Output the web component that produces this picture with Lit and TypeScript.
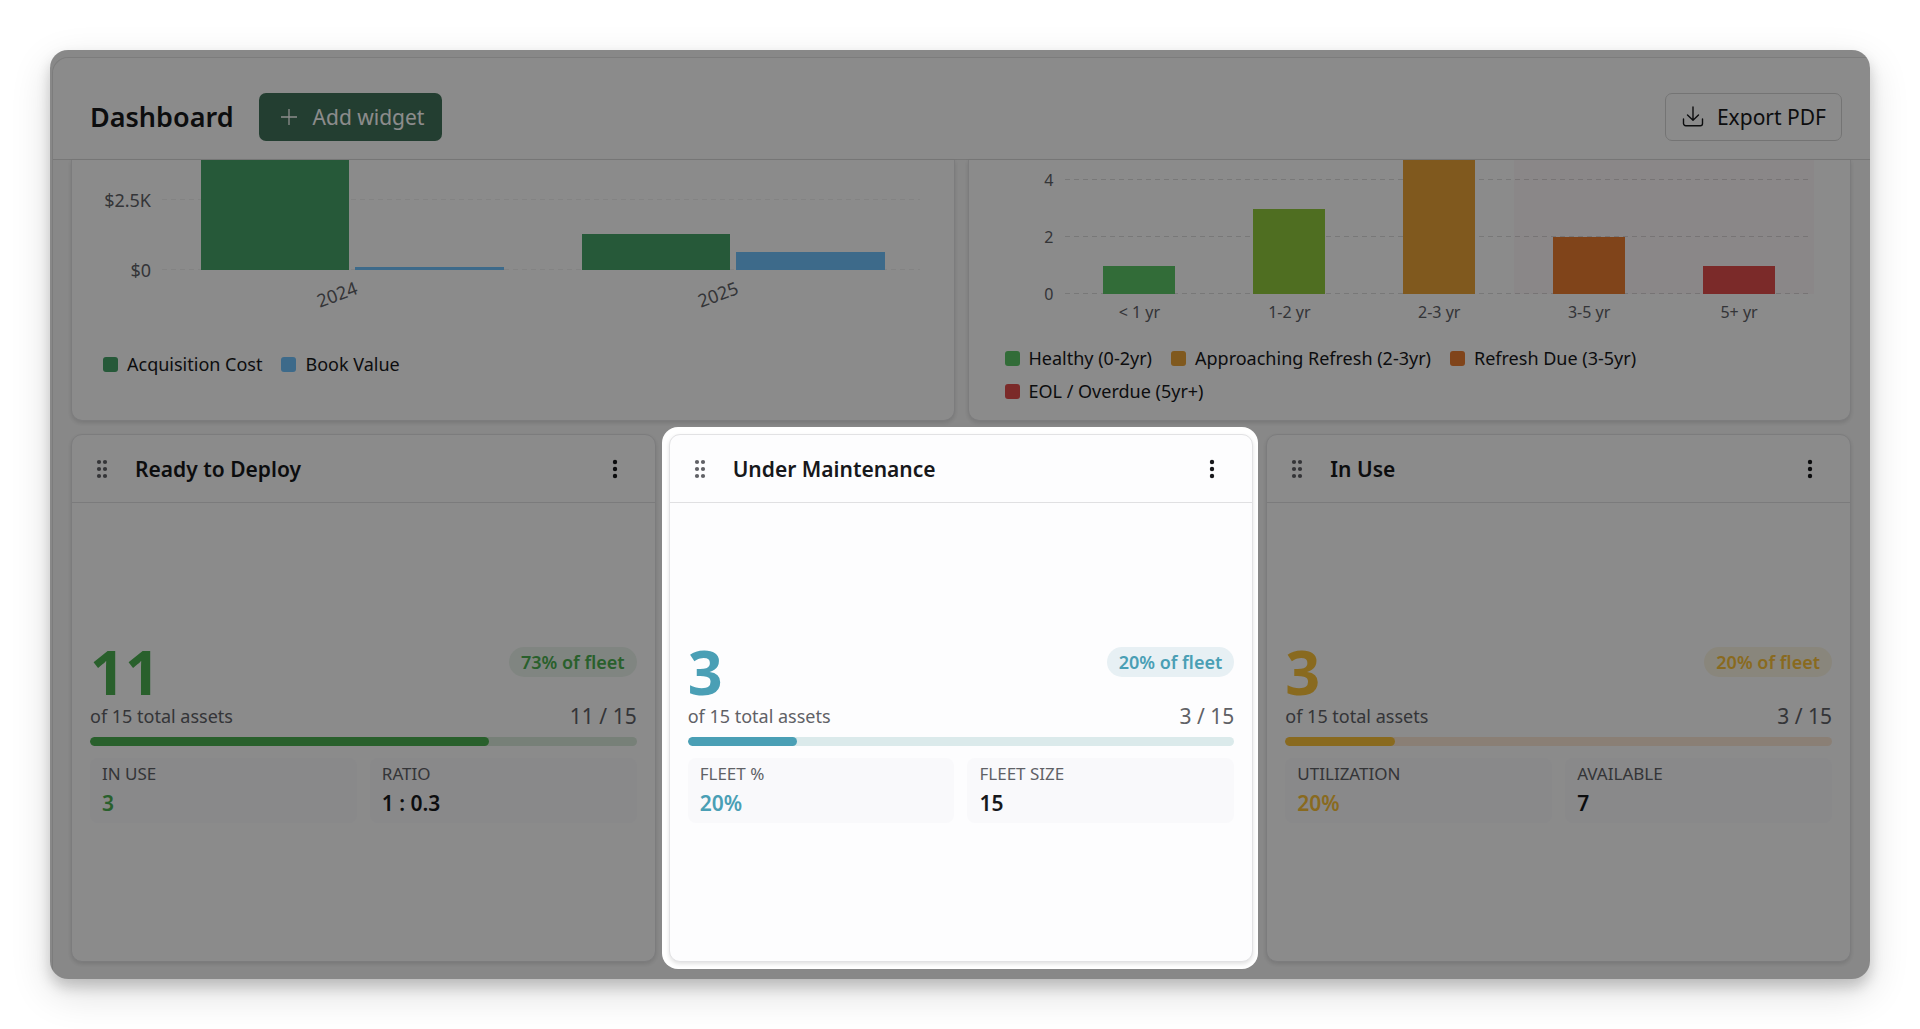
import { LitElement, html, css, svg } from "lit";
import { customElement, property } from "lit/decorators.js";
import { styleMap } from "lit/directives/style-map.js";

interface LegendItem {
  label: string;
  color: string;
}

interface Tile {
  label: string;
  value: string;
  accent?: boolean;
}

interface Stat {
  title: string;
  count: number;
  total: number;
  color: string;
  track: string;
  badge: string;
  tiles: Tile[];
  focused?: boolean;
}

const stats: Stat[] = [
  {
    title: "Ready to Deploy",
    count: 11,
    total: 15,
    color: "#4caf50",
    track: "#d9e9da",
    badge: "#eaf3eb",
    tiles: [
      { label: "IN USE", value: "3", accent: true },
      { label: "RATIO", value: "1 : 0.3" },
    ],
  },
  {
    title: "Under Maintenance",
    count: 3,
    total: 15,
    color: "#4a9fb5",
    track: "#dbeaeb",
    badge: "#e7f0f4",
    tiles: [
      { label: "FLEET %", value: "20%", accent: true },
      { label: "FLEET SIZE", value: "15" },
    ],
    focused: true,
  },
  {
    title: "In Use",
    count: 3,
    total: 15,
    color: "#f9c23a",
    track: "#fbe8d6",
    badge: "#faf4e2",
    tiles: [
      { label: "UTILIZATION", value: "20%", accent: true },
      { label: "AVAILABLE", value: "7" },
    ],
  },
];

/* Bar heights are in pixels above the zero line. */
const costGroups = [
  { year: "2024", cost: 110, book: 3 },
  { year: "2025", cost: 36, book: 18 },
];

const costLegend: LegendItem[] = [
  { label: "Acquisition Cost", color: "#45a268" },
  { label: "Book Value", color: "#6fc1fb" },
];

const ageGroups = [
  { label: "< 1 yr", height: 28, color: "#5cc566" },
  { label: "1-2 yr", height: 85, color: "#90c83c" },
  { label: "2-3 yr", height: 134, color: "#e9a237" },
  { label: "3-5 yr", height: 57, color: "#e97c31", due: true },
  { label: "5+ yr", height: 28, color: "#e04e4c", due: true },
];

const ageLegend: LegendItem[] = [
  { label: "Healthy (0-2yr)", color: "#5cc566" },
  { label: "Approaching Refresh (2-3yr)", color: "#e9a237" },
  { label: "Refresh Due (3-5yr)", color: "#e97c31" },
  { label: "EOL / Overdue (5yr+)", color: "#e04e4c" },
];

const shared = css`
  * {
    box-sizing: border-box;
  }
  button {
    font: inherit;
    color: inherit;
    background: none;
    border: 0;
    padding: 0;
    cursor: pointer;
  }
  svg {
    display: block;
  }
`;

@customElement("stat-card")
export class StatCard extends LitElement {
  @property({ attribute: false }) stat!: Stat;

  static styles = [
    shared,
    css`
      :host {
        display: flex;
        min-width: 0;
      }
      .card {
        flex: 1;
        min-width: 0;
        display: flex;
        flex-direction: column;
        background: #fdfdfe;
        border: 1px solid #e2e2e4;
        border-radius: 11px;
        box-shadow: 0 2px 4px rgba(0, 0, 0, 0.12);
      }
      .head {
        display: flex;
        align-items: center;
        height: 68px;
        padding: 0 24px;
        border-bottom: 1px solid #e0e0e2;
      }
      .grip {
        color: #606166;
        margin-right: 27px;
      }
      h2 {
        flex: 1;
        margin: 0;
        font-size: 21px;
        line-height: 28px;
        font-weight: 600;
      }
      .more {
        width: 32px;
        height: 32px;
        display: grid;
        place-items: center;
      }
      .body {
        flex: 1;
        display: flex;
        flex-direction: column;
        justify-content: center;
        padding: 12px 18px;
      }
      .top {
        display: flex;
        justify-content: space-between;
        align-items: flex-start;
      }
      .count {
        font-size: 61px;
        line-height: 60px;
        font-weight: 700;
      }
      .badge {
        margin-top: 5px;
        padding: 0 12px;
        border-radius: 15px;
        font-size: 18px;
        line-height: 30px;
        font-weight: 600;
      }
      .mid {
        display: flex;
        justify-content: space-between;
        align-items: center;
        color: #606166;
      }
      .sub {
        font-size: 18px;
        line-height: 24px;
      }
      .frac {
        font-size: 21px;
        line-height: 28px;
      }
      .track {
        height: 9px;
        margin-top: 7px;
        border-radius: 5px;
        overflow: hidden;
      }
      .fill {
        height: 100%;
        border-radius: 5px;
      }
      .tiles {
        display: grid;
        grid-template-columns: 1fr 1fr;
        gap: 13px;
        margin: 12px 0 0;
      }
      .tile {
        padding: 4px 12px 6px;
        border-radius: 8px;
        background: #f9f9fb;
      }
      dt {
        color: #606166;
        font-size: 17px;
        line-height: 24px;
      }
      dd {
        margin: 3px 0 0;
        font-size: 21px;
        line-height: 28px;
        font-weight: 600;
      }
    `,
  ];

  render() {
    const s = this.stat;
    const share = Math.round((s.count / s.total) * 100);
    return html`
      <section class="card">
        <header class="head">
          <button class="grip" aria-label="Move ${s.title}">
            <svg width="12" height="24" viewBox="6 0 12 24" fill="currentColor">
              ${[5, 12, 19].map(
                (y) => svg`<circle cx="9" cy=${y} r="2.1" /><circle cx="15" cy=${y} r="2.1" />`
              )}
            </svg>
          </button>
          <h2>${s.title}</h2>
          <button class="more" aria-label="${s.title} options">
            <svg width="24" height="24" viewBox="0 0 24 24" fill="currentColor">
              ${[5, 12, 19].map((y) => svg`<circle cx="12" cy=${y} r="2.2" />`)}
            </svg>
          </button>
        </header>
        <div class="body">
          <div class="top">
            <span class="count" style=${styleMap({ color: s.color })}>${s.count}</span>
            <span class="badge" style=${styleMap({ color: s.color, background: s.badge })}
              >${share}% of fleet</span
            >
          </div>
          <div class="mid">
            <span class="sub">of ${s.total} total assets</span>
            <span class="frac">${s.count} / ${s.total}</span>
          </div>
          <div
            class="track"
            role="progressbar"
            aria-label=${s.title}
            aria-valuenow=${s.count}
            aria-valuemax=${s.total}
            style=${styleMap({ background: s.track })}
          >
            <div class="fill" style=${styleMap({ width: `${share}%`, background: s.color })}></div>
          </div>
          <dl class="tiles">
            ${s.tiles.map(
              (t) => html`<div class="tile">
                <dt>${t.label}</dt>
                <dd style=${styleMap(t.accent ? { color: s.color } : {})}>${t.value}</dd>
              </div>`
            )}
          </dl>
        </div>
      </section>
    `;
  }
}

@customElement("app-root")
export class AppRoot extends LitElement {
  static styles = [
    shared,
    css`
      :host {
        display: flex;
        min-height: 100vh;
        box-sizing: border-box;
        padding: 50px;
        background: #fff;
        color: #17181b;
        font-family: "Noto Sans", "Open Sans", sans-serif;
      }
      .frame {
        flex: 1;
        min-width: 0;
        display: flex;
        flex-direction: column;
        padding: 7px 0 0 2px;
        border-radius: 18px;
        overflow: hidden;
        isolation: isolate;
        background: #f8f8f8;
        box-shadow: 0 8px 14px rgba(0, 0, 0, 0.18), 0 14px 40px rgba(0, 0, 0, 0.14);
      }
      .panel {
        flex: 1;
        display: flex;
        flex-direction: column;
        border: 1px solid #e2e2e2;
        border-width: 1px 0 0 1px;
        border-radius: 16px 0 0 0;
      }
      .bar {
        display: flex;
        align-items: center;
        gap: 25px;
        padding: 35px 28px 18px 37px;
        background: #fdfdfd;
        border-bottom: 1px solid #dadada;
        border-radius: 16px 0 0 0;
      }
      h1 {
        margin: 0;
        font-size: 27px;
        line-height: 36px;
        font-weight: 600;
      }
      .btn {
        display: flex;
        align-items: center;
        height: 48px;
        border-radius: 7px;
        font-size: 21px;
        line-height: 28px;
      }
      .add {
        gap: 12px;
        padding: 0 18px;
        background: #417259;
        color: #fff;
      }
      .export {
        gap: 12px;
        margin-left: auto;
        padding: 0 15px;
        border: 1px solid #d4d4d4;
      }
      .content {
        flex: 1;
        display: flex;
        flex-direction: column;
        gap: 13px;
        padding: 0 19px 17px 18px;
      }
      .charts {
        display: grid;
        grid-template-columns: 1fr 1fr;
        gap: 13px;
      }
      .chart {
        display: flex;
        flex-direction: column;
        min-width: 0;
        background: #fdfdfd;
        border: 1px solid #e2e2e4;
        border-top: 0;
        border-radius: 0 0 11px 11px;
        box-shadow: 0 2px 4px rgba(0, 0, 0, 0.12);
      }
      .graph {
        display: grid;
        color: #606166;
      }
      .cost {
        grid-template-columns: 79px 1fr;
        column-gap: 11px;
        padding-right: 30px;
        font-size: 18px;
        line-height: 24px;
      }
      .age {
        grid-template-columns: 85px 1fr;
        column-gap: 11px;
        padding-right: 36px;
        font-size: 16px;
        line-height: 24px;
      }
      .ticks {
        display: flex;
        flex-direction: column;
        justify-content: flex-end;
        text-align: right;
      }
      .cost .ticks {
        gap: 46px;
        margin-bottom: -12px;
      }
      .age .ticks {
        gap: 33px;
        margin-bottom: -12px;
      }
      .plot {
        position: relative;
        display: flex;
      }
      .cost .plot {
        height: 110px;
      }
      .age .plot {
        height: 134px;
      }
      .lines {
        position: absolute;
        inset: 0 4px 0 0;
        display: flex;
        flex-direction: column;
        justify-content: flex-end;
      }
      .line {
        height: 1px;
        background: repeating-linear-gradient(90deg, #dadada 0 5px, transparent 5px 9px);
      }
      .cost .lines {
        gap: 69px;
      }
      .cost .line {
        background: repeating-linear-gradient(90deg, #efefef 0 5px, transparent 5px 9px);
      }
      .age .lines {
        gap: 56px;
      }
      .band {
        position: relative;
        flex: 1;
        display: flex;
        align-items: flex-end;
        justify-content: center;
        gap: 6px;
      }
      .due {
        background: rgba(200, 60, 90, 0.035);
      }
      .cost .item {
        width: 39%;
        background: #45a268;
      }
      .cost .book {
        background: #6fc1fb;
      }
      .age .item {
        width: 72px;
      }
      .names {
        grid-column: 2;
        display: flex;
        text-align: center;
      }
      .name {
        flex: 1;
      }
      .age .name {
        padding-top: 6px;
      }
      .cost .name {
        display: flex;
        padding-top: 5px;
        height: 82px;
      }
      .year {
        width: 51%;
        height: 24px;
        text-align: right;
        transform: rotate(-20deg);
        transform-origin: 100% 50%;
      }
      .legend {
        display: flex;
        flex-wrap: wrap;
        gap: 9px 19px;
        margin: 0;
        padding: 0;
        list-style: none;
        font-size: 18px;
        line-height: 24px;
      }
      .legend li {
        display: flex;
        align-items: center;
        gap: 9px;
      }
      .swatch {
        width: 15px;
        height: 15px;
        border-radius: 3px;
      }
      .cost-legend {
        padding: 0 31px 43px;
      }
      .age-legend {
        padding: 22px 36px 17px;
      }
      .cards {
        flex: 1;
        display: grid;
        grid-template-columns: repeat(3, 1fr);
        gap: 13px;
      }
      .slot {
        display: grid;
        min-width: 0;
      }
      .focused {
        position: relative;
        z-index: 1;
      }
      .focused::before {
        content: "";
        position: absolute;
        inset: -7px -5px -7px -7px;
        border-radius: 16px;
        background: #fff;
        box-shadow: 0 0 0 200vmax rgba(0, 0, 0, 0.45);
      }
      .focused stat-card {
        position: relative;
      }
    `,
  ];

  private legend(items: LegendItem[], cls: string) {
    return html`<ul class="legend ${cls}">
      ${items.map(
        (i) => html`<li>
          <span class="swatch" style=${styleMap({ background: i.color })}></span>${i.label}
        </li>`
      )}
    </ul>`;
  }

  render() {
    return html`
      <main class="frame">
        <div class="panel">
          <header class="bar">
            <h1>Dashboard</h1>
            <button class="btn add">
              <svg width="24" height="24" viewBox="0 0 24 24" fill="none" stroke="currentColor" stroke-width="1.3">
                <path d="M12 4v16M4 12h16" />
              </svg>
              Add widget
            </button>
            <button class="btn export">
              <svg
                width="24"
                height="24"
                viewBox="0 0 24 24"
                fill="none"
                stroke="currentColor"
                stroke-width="1.4"
                stroke-linecap="round"
                stroke-linejoin="round"
              >
                <path d="M12 2v13M6.500 10l5.500 5.300 5.500-5.300" />
                <path d="M2.500 14v4.500a2.200 2.200 0 0 0 2.200 2.200h14.600a2.200 2.200 0 0 0 2.200-2.200v-4.500" />
              </svg>
              Export PDF
            </button>
          </header>
          <div class="content">
            <div class="charts">
              <section class="chart">
                <div class="graph cost">
                  <div class="ticks"><span>$2.5K</span><span>$0</span></div>
                  <div class="plot">
                    <div class="lines"><div class="line"></div><div class="line"></div></div>
                    ${costGroups.map(
                      (g) => html`<div class="band">
                        <div class="item" style=${styleMap({ height: `${g.cost}px` })}></div>
                        <div class="item book" style=${styleMap({ height: `${g.book}px` })}></div>
                      </div>`
                    )}
                  </div>
                  <div class="names">
                    ${costGroups.map(
                      (g) => html`<div class="name"><span class="year">${g.year}</span></div>`
                    )}
                  </div>
                </div>
                ${this.legend(costLegend, "cost-legend")}
              </section>
              <section class="chart">
                <div class="graph age">
                  <div class="ticks"><span>4</span><span>2</span><span>0</span></div>
                  <div class="plot">
                    <div class="lines">
                      <div class="line"></div>
                      <div class="line"></div>
                      <div class="line"></div>
                    </div>
                    ${ageGroups.map(
                      (g) => html`<div class="band ${g.due ? "due" : ""}">
                        <div
                          class="item"
                          style=${styleMap({ height: `${g.height}px`, background: g.color })}
                        ></div>
                      </div>`
                    )}
                  </div>
                  <div class="names">
                    ${ageGroups.map((g) => html`<div class="name">${g.label}</div>`)}
                  </div>
                </div>
                ${this.legend(ageLegend, "age-legend")}
              </section>
            </div>
            <div class="cards">
              ${stats.map(
                (s) => html`<div class="slot ${s.focused ? "focused" : ""}">
                  <stat-card .stat=${s}></stat-card>
                </div>`
              )}
            </div>
          </div>
        </div>
      </main>
    `;
  }
}
